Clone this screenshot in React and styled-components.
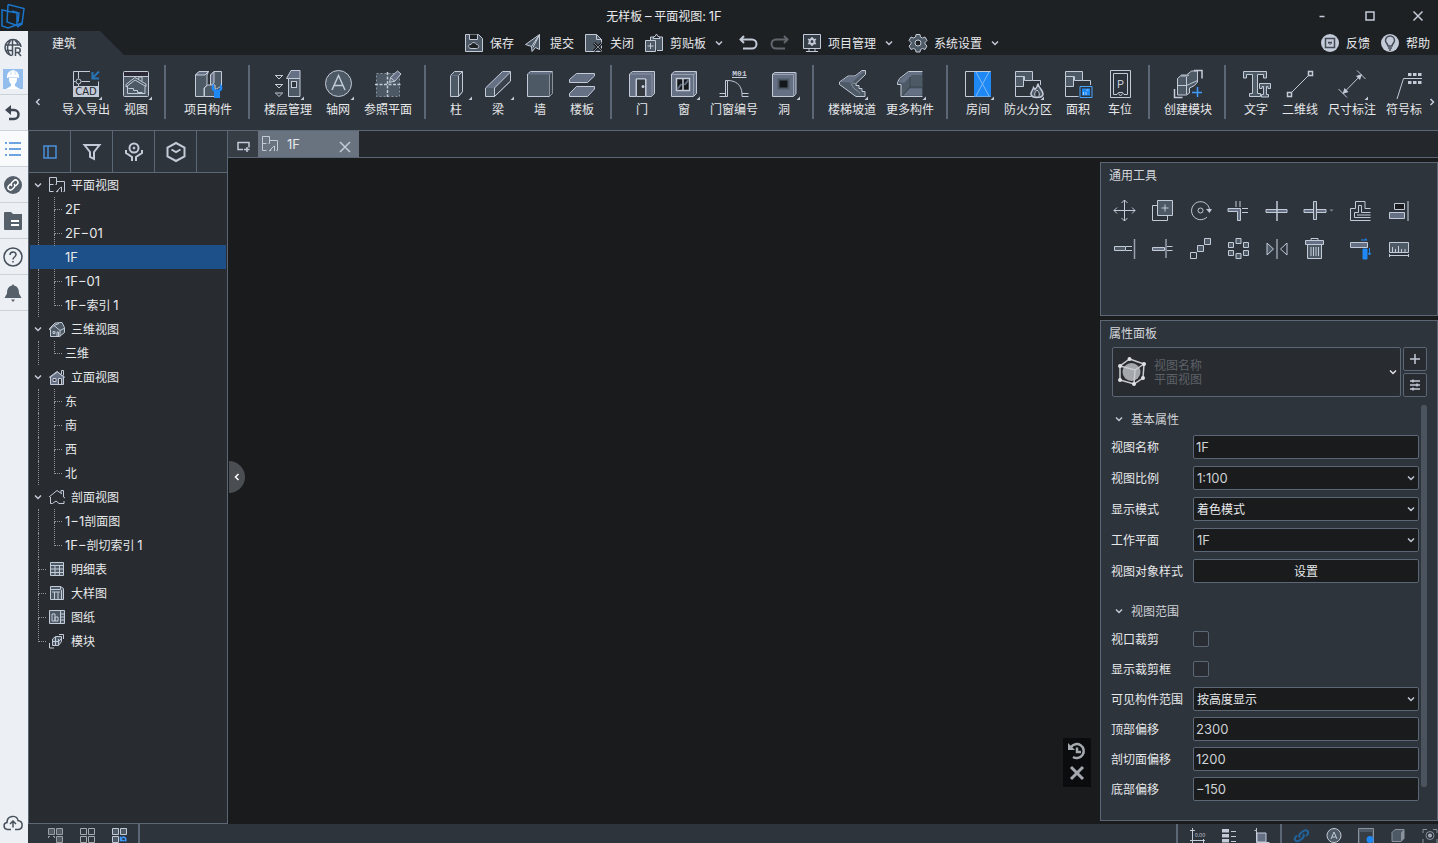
import styled, { createGlobalStyle } from "styled-components";

const colors = {
  title: "#1e2124",
  bar: "#2e343c",
  panel: "#282b2f",
  canvas: "#191b1c",
  line: "#5b6774",
  text: "#e6e8ea",
  icon: "#c3cad8",
  fill: "#4d5a66",
  mid: "#667085",
  blue: "#1e88f5",
  select: "#1d4f88",
};

const GlobalStyle = createGlobalStyle`
  * {
    box-sizing: border-box;
  }
  html, body, #root {
    height: 100%;
  }
  body {
    margin: 0;
    overflow: hidden;
    background: ${colors.canvas};
    color: ${colors.text};
    font: 12px/20px "Noto Sans CJK SC", sans-serif;
  }
  button, input, select {
    margin: 0;
    padding: 0;
    border: 0;
    background: none;
    color: inherit;
    font: inherit;
  }
  ul {
    margin: 0;
    padding: 0;
    list-style: none;
  }
  svg {
    display: block;
    flex: none;
    overflow: visible;
  }
`;

const Page = styled.div`
  display: flex;
  flex-direction: column;
  height: 100vh;
  overflow: hidden;
`;

/* ---------- title bar ---------- */

const TitleBar = styled.header`
  display: flex;
  flex: 0 0 31px;
  align-items: center;
  background: ${colors.title};
`;

const Title = styled.h1`
  flex: 1;
  margin: 0;
  font-size: 12px;
  font-weight: 400;
  line-height: 20px;
  text-align: center;
`;

const WindowButtons = styled.div`
  display: flex;
  gap: 8px;
`;

const WindowButton = styled.button`
  display: flex;
  align-items: center;
  justify-content: center;
  width: 40px;
  height: 30px;
`;

const Latin = styled.span`
  font-family: Inter, sans-serif;
  font-size: 13px;
`;

/* ---------- left rail ---------- */

const Body = styled.div`
  display: flex;
  flex: 1;
  min-height: 0;
`;

const Rail = styled.nav`
  display: flex;
  flex: 0 0 28px;
  flex-direction: column;
  background: #eceff3;
`;

const RailButton = styled.button`
  display: flex;
  flex: 0 0 ${(p) => p.$height || 36}px;
  align-items: center;
  justify-content: center;
  width: 100%;
  padding-right: 3px;
  background: ${(p) => (p.$active ? "#f9fafb" : "transparent")};
  border-bottom: ${(p) => (p.$divided ? "1px solid #cdd2d8" : "0")};
`;

const RailSpace = styled.div`
  flex: 1;
`;

const Main = styled.div`
  display: flex;
  flex: 1;
  flex-direction: column;
  min-width: 0;
`;

/* ---------- quick bar ---------- */

const QuickBar = styled.div`
  display: grid;
  flex: 0 0 24px;
  grid-template-columns: 1fr auto 1fr;
  align-items: center;
  background: ${colors.title};
`;

const MenuTab = styled.button`
  width: 96px;
  height: 24px;
  padding-right: 24px;
  background: ${colors.bar};
  clip-path: polygon(0 0, 72px 0, 96px 24px, 0 24px);
`;

const QuickGroup = styled.div`
  display: flex;
  gap: ${(p) => p.$gap || 11}px;
  align-items: center;
  justify-content: ${(p) => (p.$end ? "flex-end" : "flex-start")};
  padding-right: ${(p) => (p.$end ? 8 : 0)}px;
`;

const QuickButton = styled.button`
  display: flex;
  gap: 7px;
  align-items: center;
  white-space: nowrap;
`;

/* ---------- ribbon ---------- */

const RibbonBar = styled.div`
  display: flex;
  flex: 0 0 76px;
  background: ${colors.bar};
  border-bottom: 1px solid ${colors.line};
`;

const RibbonScroll = styled.button`
  display: flex;
  flex: 0 0 ${(p) => p.$width}px;
  align-items: center;
  justify-content: center;
  padding-top: 18px;
`;

const RibbonGroups = styled.div`
  display: flex;
  flex: 1;
  min-width: 0;
  padding-top: 10px;
  overflow: hidden;
`;

const RibbonGroup = styled.div`
  display: flex;
  flex: none;
  gap: 8px;
  height: 54px;
  padding: 4px 11px 0 13px;
  border-right: 2px solid ${colors.line};

  &:last-child {
    border-right: 0;
  }
`;

const RibbonButton = styled.button`
  display: flex;
  flex: none;
  flex-direction: column;
  align-items: center;
  width: ${(p) => p.$width}px;
  height: 50px;
  white-space: nowrap;
`;

const ClippedLabel = styled.span`
  align-self: flex-start;
  padding-left: 1px;
`;

/* ---------- project tree ---------- */

const Workspace = styled.div`
  display: flex;
  flex: 1;
  min-height: 0;
`;

const Side = styled.aside`
  display: flex;
  flex: 0 0 200px;
  flex-direction: column;
  background: ${colors.panel};
  border: 1px solid ${colors.line};
  border-top: 0;
`;

const SideTabs = styled.div`
  display: flex;
  flex: 0 0 42px;
  background: ${colors.bar};
  border-bottom: 1px solid ${colors.line};
`;

const SideTab = styled.button`
  display: flex;
  flex: 0 0 42px;
  align-items: center;
  justify-content: center;
  border-right: 1px solid ${colors.line};
`;

const TreeRow = styled.button`
  display: flex;
  align-items: center;
  width: calc(100% - 2px);
  height: 24px;
  margin-left: 1px;
  padding-left: ${(p) => (p.$selected ? 35 : p.$group ? 2 : 8)}px;
  background: ${(p) => (p.$selected ? colors.select : "transparent")};
  text-align: left;
  white-space: nowrap;
`;

const TreeIcon = styled.span`
  display: flex;
  padding: 0 6px 0 5px;
`;

const Guide = styled.span`
  width: 16px;
  height: 24px;
  border-left: 1px dotted #90949a;
`;

const Elbow = styled.span`
  width: 8px;
  height: 24px;
  margin-right: ${(p) => (p.$leaf ? -2 : 3)}px;

  &::before,
  &::after {
    display: block;
    height: 12px;
    border-left: 1px dotted #90949a;
    content: "";
  }
  &::before {
    border-bottom: 1px dotted #90949a;
  }
  &::after {
    border-left-color: ${(p) => (p.$last ? "transparent" : "#90949a")};
  }
`;

/* ---------- drawing area ---------- */

const View = styled.main`
  display: flex;
  flex: 1;
  flex-direction: column;
  min-width: 0;
`;

const ViewTabs = styled.div`
  display: flex;
  flex: 0 0 27px;
  background: #24282c;
  border-bottom: 1px solid ${colors.line};
`;

const NewViewButton = styled.button`
  display: flex;
  flex: 0 0 30px;
  align-items: center;
  justify-content: center;
  padding-top: 4px;
  background: #373d44;
`;

const ViewTab = styled.div`
  display: flex;
  flex: 0 0 101px;
  align-items: center;
  height: 26px;
  padding: 0 8px 0 4px;
  background: #69737f;
`;

const ViewName = styled.button`
  display: flex;
  flex: 1;
  gap: 9px;
  align-items: center;
`;

const CloseTab = styled.button`
  padding-top: 5px;
`;

const Canvas = styled.div`
  position: relative;
  display: flex;
  flex: 1;
  justify-content: flex-end;
  min-height: 0;
  background: ${colors.canvas};
`;

const Collapse = styled.button`
  position: absolute;
  top: calc(50% - 30px);
  left: 1px;
  display: flex;
  align-items: center;
  justify-content: center;
  width: 16px;
  height: 32px;
  background: #4a4e52;
  border-radius: 0 16px 16px 0;
`;

const FloatTools = styled.div`
  display: flex;
  flex-direction: column;
  gap: 4px;
  align-items: center;
  align-self: flex-end;
  width: 28px;
  margin: 0 9px 37px 0;
  padding: 4px 0 5px;
  background: #0b0c0d;
`;

const Dock = styled.div`
  display: flex;
  flex: 0 0 338px;
  flex-direction: column;
  gap: 4px;
  padding: 4px 0 3px;
`;

const Panel = styled.section`
  flex: ${(p) => (p.$grow ? "1" : "0 0 154px")};
  min-height: 0;
  padding-left: 8px;
  background: ${colors.bar};
  border: 1px solid ${colors.line};
  overflow: hidden;
`;

const PanelTitle = styled.h2`
  margin: 0;
  padding: 2px 0;
  color: #d3d6da;
  font-size: 12px;
  font-weight: 400;
`;

const ToolGrid = styled.div`
  display: grid;
  grid-template-columns: repeat(5, 38px) 46px 38px 38px;
  grid-auto-rows: 38px;
  padding: 5px 0 0 5px;
`;

const Tool = styled.button`
  display: flex;
  align-items: center;
`;

/* ---------- properties ---------- */

const TypePicker = styled.div`
  display: flex;
  gap: 2px;
  height: 50px;
  margin: 2px 10px 8px 3px;
`;

const TypeButton = styled.button`
  display: flex;
  flex: 1;
  gap: 7px;
  align-items: center;
  padding: 0 1px 0 4px;
  background: ${colors.panel};
  border: 1px solid ${colors.line};
  border-radius: 2px;
  color: #5c6168;
  line-height: 14px;
  text-align: left;
`;

const TypeText = styled.span`
  flex: 1;
`;

const TypeActions = styled.div`
  display: grid;
  gap: 2px;
  width: 24px;
`;

const TypeAction = styled.button`
  display: flex;
  align-items: center;
  justify-content: center;
  background: ${colors.panel};
  border: 1px solid ${colors.line};
  border-radius: 2px;
`;

const Properties = styled.div`
  display: flex;
  justify-content: space-between;
  padding-right: 10px;
`;

const Fields = styled.div`
  flex: 1;
  padding: 2px 2px 0 2px;
`;

const Scrollbar = styled.div`
  width: 6px;
  height: 382px;
  background: #4a535e;
  border-radius: 2px;
`;

const Section = styled.fieldset`
  display: grid;
  gap: ${(p) => p.$gap}px;
  min-width: 0;
  margin: 0 0 16px;
  padding: 0;
  border: 0;
`;

const SectionHead = styled.button`
  display: flex;
  gap: 6px;
  align-items: center;
  height: 24px;
  margin-bottom: ${(p) => p.$pull}px;
  padding-left: 2px;
  color: #cfd2d6;
`;

const Field = styled.div`
  display: grid;
  grid-template-columns: 82px 1fr;
  align-items: center;
  height: 24px;
`;

const control = `
  width: 100%;
  height: 24px;
  padding: 0 3px;
  background: #191b1c;
  border: 1px solid #5b6774;
  border-radius: 2px;
`;

const TextBox = styled.input`
  ${control}
  padding: 0 2px;
  color: #cfd2d6;
  font-family: Inter, "Noto Sans CJK SC", sans-serif;
  font-size: 13px;
`;

const SelectWrap = styled.div`
  position: relative;

  svg {
    position: absolute;
    top: 6px;
    right: 2px;
    pointer-events: none;
  }
`;

const Select = styled.select`
  ${control}
  appearance: none;
  color: ${(p) => (p.$latin ? "#cfd2d6" : colors.text)};
  font-family: ${(p) => (p.$latin ? "Inter, sans-serif" : "inherit")};
  font-size: ${(p) => (p.$latin ? 13 : 12)}px;
`;

const SetButton = styled.button`
  ${control}
`;

const CheckBox = styled.input`
  width: 16px;
  height: 16px;
  appearance: none;
  background: #2a2c33;
  border: 1px solid ${colors.line};
  border-radius: 2px;
`;

/* ---------- status bar ---------- */

const StatusBar = styled.footer`
  display: flex;
  flex: 0 0 19px;
  align-items: flex-start;
  justify-content: space-between;
  background: ${colors.bar};
  overflow: hidden;
`;

const StatusGroup = styled.div`
  display: flex;
  gap: 16px;
  height: 19px;
  padding: 4px 10px 0 ${(p) => p.$left || 12}px;
  border-right: ${(p) => (p.$end ? "2px solid #5b6774" : "0")};
  border-left: ${(p) => (p.$start ? "2px solid #5b6774" : "0")};
`;

const StatusRight = styled.div`
  display: flex;
  margin-right: -10px;
`;

/* ---------- icons ---------- */

const I = colors.icon;
const F = colors.fill;
const M = colors.mid;
const B = colors.blue;

function Svg({ size = 30, box = size, width = 1, children }) {
  return (
    <svg
      width={size}
      height={size}
      viewBox={`0 0 ${box} ${box}`}
      fill="none"
      stroke={I}
      strokeWidth={width}
      aria-hidden="true"
    >
      {children}
    </svg>
  );
}

function Chevron({ dir = "down", color = I, size = 12 }) {
  const paths = {
    down: "M3 4.5l3 3 3-3",
    left: "M7.5 3l-3 3 3 3",
    right: "M4.5 3l3 3-3 3",
  };
  return (
    <Svg size={size} box={12} width={1.5}>
      <path d={paths[dir]} stroke={color} />
    </Svg>
  );
}

const floorPlan = (
  <path d="M7.500 5V.5h-7v14h4M.5 7.500h4M6.500 7.500h1V4.500h8v10h-1M7 15c1-.5 1.500-1 2-2M8.500 15c0-2 2-4 4-5v5" />
);

const ribbonIcons = {
  cad: (
    <>
      <path d="M2.500 17V2.500H19M7.500 2.500v7M7.500 15v2M10.500 12.500H19M2.500 12.500h2M27.500 12.500V17" />
      <circle cx="7.500" cy="12.500" r="2.500" />
      <path d="M2 17h26v11H2z" fill={I} stroke="none" />
      <text x="15" y="26" fill="#23282e" stroke="none" fontSize="10" fontFamily="DejaVu Sans" textAnchor="middle">CAD</text>
      <path d="M28 2.500l-6.500 6.500M21.500 3v6.500H28" stroke="#2775b5" strokeWidth="2" />
    </>
  ),
  view: (
    <>
      <rect x="2.500" y="2.500" width="25" height="25" rx="1" fill={F} />
      <path d="M3 3h24v4H3z" fill="#2d2b38" stroke="none" />
      <path d="M3 7.500h24M5 15.500l9-7 11 6.500v2.500L14 11l-9 7zM17.500 10l.5-2h3v4M6.500 17v7.500h17.500v-7M7.500 19.500h5v2h4v2h5" />
    </>
  ),
  project: (
    <>
      <path d="M2.500 6L6 2.500h9.500L14 6v10l-3 3v8.500H2.500z" fill={F} />
      <path d="M2.500 6L6 2.500h9.500L12 6z" fill={M} />
      <path d="M17.500 6L21 2.500h7.500V17l-5 3h-6z" fill={F} />
      <path d="M17.500 6L21 2.500V14l-3.500 3z" fill={M} />
      <path d="M11.500 19l3-3H22v11.500H11.500z" fill={F} />
      <path d="M21 14.500c-3 2-3.500 6.500 0 8V29h6v-6.500c3.500-1.500 3-6 0-8V19l-1.500 1.500h-3L21 19z" fill={B} stroke="none" />
    </>
  ),
  levels: (
    <>
      <path d="M2 6.500h8M3 7l3 3 3-3M2 15.500h8M3 16l3 3 3-3M2 24h8M3 24.500l3 3 3-3" />
      <path d="M13.500 9.500L18 1.500h9v8z" fill={M} />
      <path d="M15.500 9.500H27v18H15.500z" fill={F} />
      <rect x="18.500" y="12.500" width="5" height="6" fill={colors.bar} />
    </>
  ),
  grid: (
    <>
      <circle cx="15.500" cy="14.500" r="13" fill={F} />
      <path d="M9 21l6.500-14.500L22 21M11 16.500h9" strokeWidth="1.500" />
    </>
  ),
  refPlane: (
    <>
      <path d="M3.500 4.500h23v23h-23z" fill={F} stroke="#8a929e" strokeDasharray="2 2" />
      <path d="M2 15.500h26M14.500 3v25" strokeDasharray="3 1.500" strokeWidth="1.500" />
      <path d="M16.500 13.500l1-5 7-6.500 3.500 3-6 7z" fill={M} />
      <path d="M18 9l3.500 3" />
    </>
  ),
  column: (
    <>
      <path d="M9.500 6.500l4-4h8v20l-4 5h-8z" fill={F} />
      <path d="M17.500 27.500v-21l4-4v20z" fill="#39424b" />
      <path d="M9.500 6.500h8" stroke={M} />
    </>
  ),
  beam: (
    <>
      <path d="M2.500 19l17-16.500h8v9.500l-16 15.500h-9z" fill={M} />
      <path d="M11.500 19L27.500 3v9l-16 15.500z" fill="#39424b" />
      <path d="M3 19h8v8H3z" fill={F} stroke="none" />
    </>
  ),
  wall: (
    <>
      <path d="M2.500 5l3-2.500h22v22l-3 3h-22z" fill={F} />
      <path d="M24.500 5.500l3-3v22l-3 3z" fill="#39424b" stroke="#8a929e" />
      <path d="M3 5l3-2h21l-3 2.500H3z" fill={M} stroke="none" />
    </>
  ),
  slab: (
    <>
      <path d="M2.500 10.500l7-6h18V7l-7 6.500h-18z" fill={M} />
      <path d="M2.500 24.500l7-7h18V20l-7 7.500h-18z" fill={M} />
    </>
  ),
  door: (
    <>
      <path d="M2.500 5l3-2.500h22v22l-3 3H19V10H9v17.500H2.500z" fill={M} />
      <path d="M9.500 10h9v17.500h-9z" fill="#33393f" />
      <path d="M25 5v22M3 5h22" stroke="#8c95a5" />
      <circle cx="16" cy="17.500" r="1.500" fill={I} stroke="none" />
    </>
  ),
  window: (
    <>
      <path d="M2.500 5l3-2.500h22v22l-3 3h-22z" fill={M} />
      <path d="M24.500 5.500v22M3 5.500h22l2.500-3" stroke="#98a1b0" />
      <path d="M7.500 9.500h13v12h-13z" fill="#15181b" strokeWidth="1.500" />
      <path d="M8.500 20l4-5M15.500 16l4-5" stroke={M} strokeWidth="2" />
      <path d="M14 9.500v12" strokeWidth="1.500" />
    </>
  ),
  tag: (
    <>
      <text x="20.500" y="7" fill={I} stroke="none" fontSize="8" fontWeight="700" fontFamily="Liberation Mono" textAnchor="middle">M01</text>
      <path d="M13 8.500h14.500M6.500 11.500h2v16h-2zM8.500 11.500c8 0 14 4 14.500 13M.5 24.500h6v3h-6M29.500 24.500H23v3h6.500" />
    </>
  ),
  opening: (
    <>
      <path d="M3.500 5L6 3.500h21v21l-2.500 3h-21z" fill={M} />
      <path d="M24.500 5.500v22M3.500 5.500h21l2.500-2" stroke="#98a1b0" />
      <path d="M9.500 10.500h10v9h-10z" fill="#15181b" stroke={F} strokeWidth="2" />
    </>
  ),
  stairs: (
    <>
      <path d="M2.500 13L11 7h7l7-5.500h3.500v4L19 14.500v2h3v3h3v3h3v5h-9L2.500 15.500z" fill={F} />
      <path d="M3 13l8.500-5.500H18L25.500 2H28L15 13.500z" fill={M} stroke="none" />
      <path d="M15 14l4 .5M14 14.500l3 5 3 2 3 3" stroke="#8a929e" />
    </>
  ),
  more: (
    <>
      <path d="M27.500 2.500h-14l-9 7-2 4v2H6v12h21.500" fill={F} />
      <path d="M3 13l11-10h13v3H17l-8 8z" fill={M} stroke="none" />
      <path d="M15 8v10h12M15 18l-8 9" stroke="#39424b" />
      <path d="M8 26.500l7-7h12v7z" fill={M} stroke="none" />
    </>
  ),
  room: (
    <>
      <path d="M2.500 2.500h25v25h-25z" />
      <path d="M11 3h17v24.500H11z" fill={B} stroke="none" />
      <path d="M13 3l13 24M26 3L13 27" stroke="#7eb9f5" />
    </>
  ),
  fireZone: (
    <>
      <path d="M2.500 2.500h17v9h-8v-4h-9z" fill={F} />
      <path d="M2.500 7.500h8v10h-8z" fill={F} />
      <path d="M2.500 17.500v10h16M19.500 11.500h8V16" />
      <path d="M25 14.500c0 4 5.500 7 5 11-1 4-11 4-12 0-.5-3 2-4 2.500-7l1.500 2c2-2 2.500-3 3-6z" fill={F} strokeWidth="1.500" />
      <path d="M24 21c-4 4-2 7 0 7s4-3 0-7z" fill={colors.bar} />
    </>
  ),
  area: (
    <>
      <path d="M2.500 2.500h17v9h-8v-4h-9z" fill={F} />
      <path d="M2.500 7.500h8v10h-8z" fill={F} />
      <path d="M2.500 17.500v10h13M19.500 11.500h8V16" />
      <path d="M17 17.500h12v11H17z" stroke="#4aa3ff" />
      <path d="M19 19.500h8v7h-8z" fill={B} stroke="none" />
      <path d="M20.500 26v-3M23 26v-3M25.500 21h-2" stroke="#9fceff" />
    </>
  ),
  parking: (
    <>
      <path d="M5.500 1.500h20v27h-20z" />
      <path d="M8.500 25.500v-21h14v21" />
      <text x="15.500" y="19" fill={I} stroke="none" fontSize="11" fontFamily="Inter" textAnchor="middle">P</text>
      <path d="M8.500 25.500H12l1.500-2h4l1.500 2h3.500M13.500 24.500l2 2.500 2-2.500" />
    </>
  ),
  module: (
    <>
      <path d="M4.500 9.500l4-3.500h5l5-4h6v11l-3 3.500-5 2.500v5l-3 2h-9z" fill={F} />
      <path d="M4.500 16.500h9l11-5M13.500 8v17.500M8 7h6l2-1" />
      <path d="M21 1.500h8v8M1.500 20v8.500h8" strokeWidth="1.500" />
      <path d="M24.500 18v10M19 23.500h10" stroke="#3f9bff" strokeWidth="1.500" />
    </>
  ),
  text: (
    <>
      <path d="M2.500 2.500h23V9h-3V5.500h-6v19h3v3h-11v-3h3v-19h-6V9h-3z" fill={F} />
      <path d="M18.500 14.500h11v5H27v-2h-1.500v8h2v2.500h-7v-2.500h2v-8H21v2h-2.500z" fill={F} />
    </>
  ),
  line: (
    <>
      <path d="M6 24L24 6" />
      <path d="M2.500 23.500h4v4h-4zM23.500 2.500h4v4h-4z" strokeWidth="1.500" />
    </>
  ),
  dimension: (
    <>
      <path d="M7 23.500L23.500 6.500M20 1.500l8.500 8.500M1.500 20l8.500 8.500" />
      <path d="M25 5l-2 6-4-4zM5.500 25l2-6 4 4z" fill={I} stroke="none" />
    </>
  ),
  symbol: (
    <>
      <path d="M2 30L8.500 9.500H27" />
      <path d="M13 5.500h14M13 13.500h14" strokeWidth="3" strokeDasharray="3.500 1.500" />
    </>
  ),
};

const ribbon = [
  [["导入导出", "cad", true], ["视图", "view", true]],
  [["项目构件", "project", false, 58]],
  [["楼层管理", "levels", true], ["轴网", "grid", true], ["参照平面", "refPlane"]],
  [["柱", "column", true], ["梁", "beam", true], ["墙", "wall"], ["楼板", "slab"]],
  [["门", "door"], ["窗", "window", true], ["门窗编号", "tag"], ["洞", "opening", true]],
  [["楼梯坡道", "stairs", true], ["更多构件", "more", true]],
  [["房间", "room", true], ["防火分区", "fireZone", true], ["面积", "area"], ["车位", "parking"]],
  [["创建模块", "module"]],
  [["文字", "text"], ["二维线", "line"], ["尺寸标注", "dimension", true], ["符号标", "symbol", false, 50, true]],
];

const widthFor = { 1: 34, 2: 34, 3: 38, 4: 50 };

const quickIcons = {
  save: (
    <>
      <path d="M.5.500h13l4 4v13H.5z" fill={F} />
      <path d="M4.500.500v5h8v-5M6 14.500c-4-1-3-4 0-4 1-3 5-2 5.500 0 3 0 3 4 0 4z" fill={colors.title} />
    </>
  ),
  submit: (
    <>
      <path d="M.5 10.500L14.500.500v15l-4-2-3.500 4-.5-5z" fill={F} />
      <path d="M6.500 12.500l8-12L8 13.500" />
    </>
  ),
  closeFile: (
    <>
      <path d="M.5.500h11l5 5v12H.5z" fill={F} />
      <path d="M11.500.500v5h5" />
      <path d="M9 9l8 8M17 9l-8 8" stroke="#1b1d20" strokeWidth="3" />
      <path d="M9 9l8 8M17 9l-8 8" stroke="#858a92" />
    </>
  ),
  clipboard: (
    <>
      <path d="M5.500 6V3h12v13.500H12" fill={F} />
      <path d="M8 4.500h7l-1-2h-1L11.500 0 10 2.500H9z" fill={colors.title} />
      <path d="M.5 6.500h10v11H.5z" fill={F} />
      <path d="M5.500 9v6M2.500 12h6" />
    </>
  ),
  undo: <path d="M5 2L1.500 5.500 5 9M1.500 5.500H13a4 4 0 0 1 0 9H4" strokeWidth="2" />,
  redo: <path d="M13 2l3.500 3.500L13 9M16.500 5.500H5a4 4 0 0 0 0 9h9" stroke="#62666c" strokeWidth="2" />,
  manage: (
    <>
      <path d="M.5.500h17v14H.5z" fill="#353d46" />
      <path d="M3 17.500h12M6 15v2M12 15v2" />
      <circle cx="9" cy="7.500" r="2.500" strokeWidth="2" />
      <path d="M9 3v2M9 10v2M5 5l1.500 1M13 5l-1.500 1M5 10l1.500-1M13 10l-1.500-1" strokeWidth="1.500" />
    </>
  ),
  gear: (
    <>
      <path d="M7 .5h4l.5 2.500 2 1 2.500-1 2 3.500-2 2v1.500l2 2-2 3.500-2.500-1-2 1-.5 2.500H7l-.5-2.500-2-1-2.500 1L0 12l2-2V8.500l-2-2L2 3l2.500 1 2-1z" fill={F} />
      <circle cx="9" cy="9" r="3" fill={colors.title} />
    </>
  ),
  feedback: (
    <>
      <circle cx="9" cy="9" r="9" fill={I} stroke="none" />
      <path d="M4.500 4.500h9v9h-9zM7 8.500h4" stroke="#454c56" strokeWidth="1.500" />
      <path d="M7.500 9l1.500 1.500L10.500 9" stroke="#454c56" />
    </>
  ),
  help: (
    <>
      <circle cx="9" cy="9" r="9" fill={I} stroke="none" />
      <path d="M7 12c0-2-2.500-3-2.500-5.500a4.500 4.500 0 0 1 9 0C13.500 9 11 10 11 12zM7 14h4M8 16h2" stroke="#454c56" strokeWidth="1.500" />
    </>
  ),
};

const toolIcons = [
  ["移动", <path d="M10.500 0v21M0 10.500h21M7.500 3l3-3 3 3M7.500 18l3 3 3-3M3 7.500l-3 3 3 3M18 7.500l3 3-3 3" />],
  ["复制", (
    <>
      <path d="M5 5.500H.5v15h15V16" />
      <path d="M5.500.500h15v15h-15z" fill={F} />
      <path d="M13 4.500v7M9.500 8h7" />
    </>
  )],
  ["旋转", (
    <>
      <path d="M17 17a9 9 0 1 1 2.500-7.500" />
      <circle cx="10.500" cy="10.500" r="2.500" />
      <path d="M16 9h6l-2.500 4z" fill={I} stroke="none" />
    </>
  )],
  ["修剪", (
    <>
      <path d="M0 8.500h12.500v12h-3v-9H0z" fill={M} />
      <path d="M8 1v6M12 1v6M14 8.500h6M14 12.500h6" />
    </>
  )],
  ["打断", (
    <>
      <path d="M0 9.500h21v3H0z" fill={M} />
      <path d="M11 1v20" strokeWidth="1.500" />
    </>
  )],
  ["拆分", (
    <>
      <path d="M0 9.500h22v3H0z" fill={M} />
      <path d="M9.500 1.500h3v18h-3z" fill={F} />
      <path d="M25.500 9.500h4l-2 2z" fill="#858d99" stroke="none" />
    </>
  )],
  ["偏移", <path d="M20.500 8.500H15v-7H5.500v7H.5v12h20M20.500 12.500h-9v-7h-3v7H4.500v5h16M20.500 15H7" />],
  ["对齐", (
    <>
      <path d="M6.500 3.500h10v6h-10z" fill="#191b1c" />
      <path d="M1.500 12.500h15v6h-15z" fill={M} />
      <path d="M20 1v20" stroke="#98a1ae" strokeWidth="1.500" />
    </>
  )],
  ["延伸", (
    <>
      <path d="M.5 8.500h11v4H.5z" fill={F} />
      <path d="M12 8.500h6M12 12.500h6" />
      <path d="M20.500 1v20" stroke="#98a1ae" strokeWidth="1.500" />
    </>
  )],
  ["断开", (
    <>
      <path d="M.5 9.500h12v3H.5z" fill={M} />
      <path d="M15 8.500h5.500M15 12.500h5.500" />
      <path d="M14 1v19" stroke="#98a1ae" strokeWidth="1.500" />
    </>
  )],
  ["线性阵列", (
    <>
      <path d="M.5 14.500h6v6h-6z" />
      <path d="M7.500 7.500h6v6h-6zM14.500.500h6v6h-6z" fill={F} />
    </>
  )],
  ["环形阵列", (
    <path
      d="M8 .5h5v5H8zM8 15.500h5v5H8zM.5 4.500h5v5h-5zM15.500 4.500h5v5h-5zM.5 12.500h5v5h-5zM15.500 12.500h5v5h-5z"
      fill={F}
    />
  )],
  ["镜像", (
    <>
      <path d="M1 5l6.500 6L1 17z" fill={F} />
      <path d="M21 5l-6.500 6 6.500 6z" />
      <path d="M11 1v20" strokeWidth="1.500" stroke="#98a1ae" />
    </>
  )],
  ["删除", (
    <>
      <path d="M3.500 6.500h14v14h-14z" fill={F} />
      <path d="M1.500 2.500h18v4h-18z" fill={M} />
      <path d="M7 2V.5h7V2M7 9v9M9.500 9v9M12 9v9M14.500 9v9" />
    </>
  )],
  ["连接", (
    <>
      <path d="M.5 4.500h17v5H.5z" fill={M} />
      <path d="M13 11h4v10h-4z" fill={B} stroke={B} />
      <path d="M11 2h6M15 .5l2 1.500M19.500 10v7M18 15l1.500 2 1.500-2" stroke={B} />
    </>
  )],
  ["测量", (
    <>
      <path d="M1.500 4.500h19v10h-19z" fill={F} />
      <path d="M4.500 14V9M7.500 14v-3M10.500 14V8M13.500 14v-3M17 14v-3M1 17.500h20M1.500 16v3M20.500 16v3" />
    </>
  )],
];

const treeIcons = {
  plan: floorPlan,
  three: (
    <>
      <path d="M.5 7.500L6 2l7-.500 2.500 5v5l-5 4h-9V9z" fill={F} />
      <path d="M0 9l5-4.500 6 5 5-2.500M5 4.500l5-2M11 9.500v6M4 10.500h2v2H4zM8 15v-4h1.500v4" />
    </>
  ),
  elevation: (
    <>
      <path d="M1.500 8v7.500h13V8l-6-5z" fill={M} />
      <path d="M0 8.500l8-6 8 6M12.500 5V1.500h2v5" />
      <path d="M4 9.500h3v3H4zM9.500 15v-5.500h3V15" fill={colors.panel} />
    </>
  ),
  section: <path d="M1.500 8v6.500h2L7 12l3 2.500h5V12M0 8l8-6.500L13 5M12 4V1.500h2.500V8L16 9" />,
  table: (
    <>
      <path d="M1.500 1.500h13v13h-13z" fill={F} />
      <path d="M1.500 4.500h13M1.500 8h13M1.500 11.500h13M6 4.500v10M10.500 4.500v10" />
    </>
  ),
  detail: (
    <>
      <path d="M1.500 1.500h10l3 2v11h-13z" fill={F} />
      <path d="M1.500 4.500h10v-3M5.500 7v7M9 7v7M12.500 5v9M3 7h8" />
    </>
  ),
  sheet: (
    <>
      <path d="M.5 1.500h15v13H.5z" fill={F} />
      <path d="M11.500 2v12M11.500 5h4M11.500 8h4M11.500 11h4M3 5h3v7H3zM6 8h3v4H6z" />
    </>
  ),
  module: (
    <>
      <path d="M3.500 6l3-2.500h6v5l-3 4h-6z" fill={F} />
      <path d="M3.500 8.500h6l3-3M6.500 4v8.500M10 1.500h4.500V6M.5 10v5H5M9.500 6v6" />
    </>
  ),
};

const tree = [
  ["平面视图", "plan", ["2F", "2F−01", "1F", "1F−01", "1F−索引 1"]],
  ["三维视图", "three", ["三维"]],
  ["立面视图", "elevation", ["东", "南", "西", "北"]],
  ["剖面视图", "section", ["1−1剖面图", "1F−剖切索引 1"]],
  ["明细表", "table"],
  ["大样图", "detail"],
  ["图纸", "sheet"],
  ["模块", "module"],
];

const statusIcons = {
  tilesA: <path d="M.5.500h6v6h-6zM8.500.500h6v6h-6zM8.500 8.500h6v6h-6zM.5 10v-1.500H2M5 8.500h1.500V10" stroke="#9aa0a8" fill="#555a60" />,
  tilesB: <path d="M.5.500h6v6h-6zM8.500.500h6v6h-6zM.5 8.500h6v6h-6zM8.500 8.500h6v6h-6z" stroke="#a4aab2" fill="#33383e" />,
  tilesC: (
    <>
      <path d="M.5.500h6v6h-6zM8.500.500h6v6h-6zM.5 8.500h6v6h-6z" fill={F} />
      <path d="M8.500 8.500v4h4M9 12c1-5 6-3 4.500 1.500" stroke="#3f9bff" strokeWidth="1.500" />
    </>
  ),
  axis: (
    <>
      <path d="M2.500 0v15M0 2.500h5M0 12.500h15M13.500 11v4" />
      <text x="10" y="9" fill={I} stroke="none" fontSize="5" fontFamily="Inter" textAnchor="middle">0.00</text>
    </>
  ),
  list: (
    <>
      <path d="M0 1h7v3.500H0zM0 6h7v3.500H0zM0 11h7v3.500H0z" fill={I} stroke="none" />
      <path d="M9 3.500h5M9 8.500h5M9 13.500h5" />
    </>
  ),
  crop: (
    <>
      <path d="M3 5h9v9H3z" fill={M} />
      <path d="M.5 2.500h2v12h13M2.500 2.500V0" />
    </>
  ),
  link: (
    <path
      d="M6 9.500c-2-2 0-4 2-5.500s4-2.500 5.500-1 .5 3.500-1.500 5M9 6c2 2 0 4-2 5.500S3 14 1.500 12.500 1 9 3 7.500"
      stroke="#22659c"
      strokeWidth="2"
    />
  ),
  auto: (
    <>
      <circle cx="8" cy="7.500" r="7" fill={F} />
      <path d="M5 11l3-7 3 7M6 9h4" />
    </>
  ),
  pane: (
    <>
      <path d="M.5.500h15v16H.5z" fill={F} stroke="#8a929e" />
      <path d="M2 4h12v12H2z" fill="#363d45" stroke="none" />
      <circle cx="12" cy="11.500" r="3.500" fill={B} stroke="none" />
    </>
  ),
  cube: (
    <>
      <path d="M2 4.500l3-3h9v9l-3 3H2z" fill={F} stroke="#8a929e" />
      <path d="M11 4.500l3-3v9l-3 3z" fill="#8a929e" stroke="none" />
    </>
  ),
  focus: (
    <>
      <path d="M1 5V1.500h4M11 1.500h4V5M1 11v4M15 11v4" stroke="#8a929e" />
      <circle cx="8" cy="7.500" r="4" stroke="#8a929e" />
      <circle cx="8" cy="7.500" r="1.500" fill="#8a929e" />
    </>
  ),
};

// Latin runs are set in Inter, one size up from the Chinese text.
function MixedText({ children }) {
  return (
    <span>
      {children.split(/([A-Za-z0-9–−:]+)/).map((part, i) =>
        i % 2 ? <Latin key={i}>{part}</Latin> : part
      )}
    </span>
  );
}

function RibbonItem({ item: [label, icon, menu, width, clipped] }) {
  return (
    <RibbonButton type="button" $width={width || widthFor[label.length]}>
      <Svg>
        {ribbonIcons[icon]}
        {menu && <path d="M31 27.500v3.500h-3.500z" fill={I} stroke="none" />}
      </Svg>
      {clipped ? <ClippedLabel>{label}</ClippedLabel> : label}
    </RibbonButton>
  );
}

function QuickItem({ icon, label, menu }) {
  return (
    <QuickButton type="button" aria-label={label || icon}>
      <Svg size={18}>{quickIcons[icon]}</Svg>
      {label}
      {menu && <Chevron />}
    </QuickButton>
  );
}

function LeftRail() {
  return (
    <Rail>
      <RailButton type="button" aria-label="网络" $height={33}>
        <Svg size={18}>
          <g stroke="#46505c" strokeWidth="1.500">
            <path d="M8 16.500A8 8 0 1 1 17 8M8.500 1v15.500M1.500 6h15M1.500 11.500H9M6.500 1.500c-4 5-4 10 0 15M11 1.500c2 1.500 3 3 3 5" />
            <path d="M11.500 17V9h2.500a2 2 0 0 1 0 4.500h-2M14 13.500l3 3.500M16 10v3" />
          </g>
        </Svg>
      </RailButton>
      <RailButton type="button" aria-label="用户" $height={31} $divided>
        <Svg size={20}>
          <path d="M0 0h20v20H0z" fill="#93bdec" stroke="none" />
          <path d="M4 8c0-9 12-9 12 0v1H4zM6 9h8c0 4-1 5-2 6v2l5 3H3l5-3v-2c-1-1-2-2-2-6z" fill="#fff" stroke="none" />
          <path d="M8 2v4M12 2v4M5 8.500h10" stroke="#c8dcf3" />
        </Svg>
      </RailButton>
      <RailButton type="button" aria-label="撤销" $divided>
        <Svg size={16}>
          <path d="M2 5h7a4.500 4.500 0 0 1 0 9H4" stroke="#3d4651" strokeWidth="2.500" />
          <path d="M0 5l6-5v10z" fill="#3d4651" stroke="none" />
        </Svg>
      </RailButton>
      <RailButton type="button" aria-label="列表" $active $divided>
        <Svg size={16}>
          <path d="M0 2h2M0 8h2M0 14h2M4 2h12M4 8h12M4 14h12" stroke="#3f87d8" strokeWidth="1.500" />
        </Svg>
      </RailButton>
      <RailButton type="button" aria-label="链接" $divided>
        <Svg size={18}>
          <circle cx="9" cy="9" r="9" fill="#55606b" stroke="none" />
          <g transform="rotate(-45 9 9)" stroke="#fff" strokeWidth="1.500">
            <path d="M8 6.500H5.500a2.500 2.500 0 0 0 0 5H8a2.500 2.500 0 0 0 2.500-2.500M10 11.500h2.500a2.500 2.500 0 0 0 0-5H10A2.500 2.500 0 0 0 7.500 9" />
          </g>
        </Svg>
      </RailButton>
      <RailButton type="button" aria-label="文件" $divided>
        <Svg size={18}>
          <path d="M0 1a1 1 0 0 1 1-1h6l2 2h9v15a1 1 0 0 1-1 1H1a1 1 0 0 1-1-1z" fill="#55606b" stroke="none" />
          <path d="M7 9h8M7 13h8" stroke="#fff" strokeWidth="2" />
        </Svg>
      </RailButton>
      <RailButton type="button" aria-label="帮助" $divided>
        <Svg size={20}>
          <g stroke="#46505c" strokeWidth="1.500">
            <circle cx="10" cy="10" r="9" />
            <path d="M7 8c0-4 6-4 6-.5 0 2.500-3 2.500-3 5M10 14v1.500" />
          </g>
        </Svg>
      </RailButton>
      <RailButton type="button" aria-label="通知" $divided>
        <Svg size={18}>
          <path d="M9 0l1 1.500c4 1 5 4 5 8l2.500 4.500H.500L3 9.500c0-4 1-7 5-8zM7 15.500h4L9 18z" fill="#55606b" stroke="none" />
        </Svg>
      </RailButton>
      <RailSpace />
      <RailButton type="button" aria-label="上传" $height={40}>
        <Svg size={20}>
          <path d="M8 16.500H4.500C0 16 0 10 4 9.500 4 2 14 1.500 15 7.500c6 1 5 9 0 9h-3M10 14.500V9M7 11l3-3 3 3" stroke="#46505c" strokeWidth="1.500" />
        </Svg>
      </RailButton>
    </Rail>
  );
}

function ProjectTree() {
  return (
    <Side>
      <SideTabs>
        <SideTab type="button" aria-label="项目">
          <Svg size={14}>
            <path d="M1 1h12v12H1zM5 1v12" stroke="#4a90d9" strokeWidth="1.500" />
          </Svg>
        </SideTab>
        <SideTab type="button" aria-label="筛选">
          <Svg size={18}>
            <path d="M1.500 2h15L11 9v7l-4-2V9z" strokeWidth="2" />
          </Svg>
        </SideTab>
        <SideTab type="button" aria-label="构件">
          <Svg size={18}>
            <circle cx="9" cy="5" r="4.500" strokeWidth="2" />
            <circle cx="9" cy="5" r="1" fill={I} />
            <path d="M1 7v3l6 4v4M17 7v3l-6 4v4" strokeWidth="2" />
          </Svg>
        </SideTab>
        <SideTab type="button" aria-label="模型">
          <Svg size={20}>
            <path d="M10 1l8.500 4.500v9L10 19l-8.500-4.500v-9zM5.500 7.500L10 10l4.500-2.500" strokeWidth="2" />
          </Svg>
        </SideTab>
      </SideTabs>
      <ul>
        {tree.map(([label, icon, children], index) => (
          <li key={label}>
            <TreeRow type="button" $group={Boolean(children)}>
              {children ? <Chevron /> : <Elbow $leaf $last={index === tree.length - 1} />}
              <TreeIcon>
                <Svg size={16}>{treeIcons[icon]}</Svg>
              </TreeIcon>
              {label}
            </TreeRow>
            {children && (
              <ul>
                {children.map((name, i) => (
                  <li key={name}>
                    <TreeRow type="button" $selected={name === "1F"}>
                      {name !== "1F" && (
                        <>
                          <Guide />
                          <Elbow $last={i === children.length - 1} />
                        </>
                      )}
                      <MixedText>{name}</MixedText>
                    </TreeRow>
                  </li>
                ))}
              </ul>
            )}
          </li>
        ))}
      </ul>
    </Side>
  );
}

function SelectField({ id, label, value, latin }) {
  return (
    <Field>
      <label htmlFor={id}>{label}</label>
      <SelectWrap>
        <Select id={id} $latin={latin}>
          <option>{value}</option>
        </Select>
        <Chevron />
      </SelectWrap>
    </Field>
  );
}

function TextField({ id, label, value }) {
  return (
    <Field>
      <label htmlFor={id}>{label}</label>
      <TextBox id={id} defaultValue={value} />
    </Field>
  );
}

function CheckField({ id, label }) {
  return (
    <Field>
      <label htmlFor={id}>{label}</label>
      <CheckBox id={id} type="checkbox" />
    </Field>
  );
}

function PropertyPanel() {
  return (
    <Panel $grow>
      <PanelTitle>属性面板</PanelTitle>
      <TypePicker>
        <TypeButton type="button">
          <Svg size={30}>
            <circle cx="14.500" cy="15" r="9" fill="#a4a7ab" stroke="none" />
            <path d="M12.500 2L27 7l-1 14-9 6-14-4V9zM3 9l15 4 9-6M18 13l-1 14" stroke="#c9ccd0" strokeWidth="1.500" />
            <path d="M12.500 2h0M27 7h0M26 21h0M17 27h0M3 23h0M3 9h0" stroke="#e0e2e4" strokeWidth="4" strokeLinecap="round" />
          </Svg>
          <TypeText>
            视图名称
            <br />
            平面视图
          </TypeText>
          <Chevron color="#e0e2e4" />
        </TypeButton>
        <TypeActions>
          <TypeAction type="button" aria-label="新建">
            <Svg size={12}>
              <path d="M6 1v10M1 6h10" strokeWidth="1.500" />
            </Svg>
          </TypeAction>
          <TypeAction type="button" aria-label="编辑">
            <Svg size={12}>
              <path d="M1 2h10M1 6h10M1 10h10M4 .5v3M8 4.500v3M4 8.500v3" strokeWidth="1.500" />
            </Svg>
          </TypeAction>
        </TypeActions>
      </TypePicker>
      <Properties>
        <Fields>
          <Section $gap={7}>
            <SectionHead type="button" $pull={-3}>
              <Chevron />
              基本属性
            </SectionHead>
            <TextField id="name" label="视图名称" value="1F" />
            <SelectField id="scale" label="视图比例" value="1:100" latin />
            <SelectField id="mode" label="显示模式" value="着色模式" />
            <SelectField id="plane" label="工作平面" value="1F" latin />
            <Field>
              <label htmlFor="style">视图对象样式</label>
              <SetButton id="style" type="button">设置</SetButton>
            </Field>
          </Section>
          <Section $gap={6}>
            <SectionHead type="button" $pull={-2}>
              <Chevron />
              视图范围
            </SectionHead>
            <CheckField id="crop" label="视口裁剪" />
            <CheckField id="frame" label="显示裁剪框" />
            <SelectField id="range" label="可见构件范围" value="按高度显示" />
            <TextField id="top" label="顶部偏移" value="2300" />
            <TextField id="cut" label="剖切面偏移" value="1200" />
            <TextField id="bottom" label="底部偏移" value="−150" />
          </Section>
        </Fields>
        <Scrollbar />
      </Properties>
    </Panel>
  );
}

function Status({ names }) {
  return names.map((name) => (
    <Svg key={name} size={16}>{statusIcons[name]}</Svg>
  ));
}

function App() {
  return (
    <Page>
      <GlobalStyle />
      <TitleBar>
        <Svg size={26}>
          <path d="M8 1.500l16 4-2 15.500-5 3M8 1.500L7 19l10 3.500V10L2 7v16l6 2 14-5M12 8l7 2-1 9" stroke="#1b74c8" strokeWidth="1.500" />
        </Svg>
        <Title>
          <MixedText>无样板 – 平面视图: 1F</MixedText>
        </Title>
        <WindowButtons>
          <WindowButton type="button" aria-label="最小化">
            <Svg size={12}>
              <path d="M3.500 6.500h5" strokeWidth="1.500" />
            </Svg>
          </WindowButton>
          <WindowButton type="button" aria-label="最大化">
            <Svg size={12}>
              <path d="M2 2h8v8H2z" strokeWidth="1.500" />
            </Svg>
          </WindowButton>
          <WindowButton type="button" aria-label="关闭窗口">
            <Svg size={12}>
              <path d="M1.500 1.500l9 9M10.500 1.500l-9 9" strokeWidth="1.500" />
            </Svg>
          </WindowButton>
        </WindowButtons>
      </TitleBar>
      <Body>
        <LeftRail />
        <Main>
          <QuickBar>
            <MenuTab type="button">建筑</MenuTab>
            <QuickGroup $gap={14}>
              <QuickGroup>
                <QuickItem icon="save" label="保存" />
                <QuickItem icon="submit" label="提交" />
                <QuickItem icon="closeFile" label="关闭" />
                <QuickItem icon="clipboard" label="剪贴板" menu />
              </QuickGroup>
              <QuickItem icon="undo" />
              <QuickItem icon="redo" />
              <QuickItem icon="manage" label="项目管理" menu />
              <QuickItem icon="gear" label="系统设置" menu />
            </QuickGroup>
            <QuickGroup $end>
              <QuickItem icon="feedback" label="反馈" />
              <QuickItem icon="help" label="帮助" />
            </QuickGroup>
          </QuickBar>
          <RibbonBar>
            <RibbonScroll type="button" aria-label="向左" $width={20}>
              <Chevron dir="left" />
            </RibbonScroll>
            <RibbonGroups>
              {ribbon.map((group) => (
                <RibbonGroup key={group[0][0]}>
                  {group.map((item) => (
                    <RibbonItem key={item[0]} item={item} />
                  ))}
                </RibbonGroup>
              ))}
            </RibbonGroups>
            <RibbonScroll type="button" aria-label="向右" $width={12}>
              <Chevron dir="right" />
            </RibbonScroll>
          </RibbonBar>
          <Workspace>
            <ProjectTree />
            <View>
              <ViewTabs>
                <NewViewButton type="button" aria-label="新建视图">
                  <Svg size={13}>
                    <path d="M6 9.500H1v-7h11v5M7 9.500h5.500M10 7v5" strokeWidth="1.500" />
                  </Svg>
                </NewViewButton>
                <ViewTab>
                  <ViewName type="button">
                    <Svg size={16}>{floorPlan}</Svg>
                    <Latin>1F</Latin>
                  </ViewName>
                  <CloseTab type="button" aria-label="关闭视图">
                    <Svg size={12}>
                      <path d="M1 1l10 10M11 1L1 11" strokeWidth="1.500" />
                    </Svg>
                  </CloseTab>
                </ViewTab>
              </ViewTabs>
              <Canvas>
                <Collapse type="button" aria-label="收起">
                  <Chevron dir="left" color="#fff" />
                </Collapse>
                <FloatTools>
                  <button type="button" aria-label="恢复">
                    <Svg size={18}>
                      <path d="M3 5a7 7 0 1 1 2 10M9 5.500V10h4" stroke="#a4a9af" strokeWidth="2.500" />
                      <path d="M0 1v7h7z" fill="#a4a9af" stroke="none" />
                    </Svg>
                  </button>
                  <button type="button" aria-label="取消">
                    <Svg size={18}>
                      <path d="M3 3l12 12M15 3L3 15" stroke="#a4a9af" strokeWidth="3" />
                    </Svg>
                  </button>
                </FloatTools>
                <Dock>
                  <Panel>
                    <PanelTitle>通用工具</PanelTitle>
                    <ToolGrid>
                      {toolIcons.map(([label, icon]) => (
                        <Tool key={label} type="button" aria-label={label}>
                          <Svg size={22}>{icon}</Svg>
                        </Tool>
                      ))}
                    </ToolGrid>
                  </Panel>
                  <PropertyPanel />
                </Dock>
              </Canvas>
            </View>
          </Workspace>
          <StatusBar>
            <StatusGroup $end $left={20}>
              <Status names={["tilesA", "tilesB", "tilesC"]} />
            </StatusGroup>
            <StatusRight>
              <StatusGroup $start>
                <Status names={["axis", "list", "crop"]} />
              </StatusGroup>
              <StatusGroup $start>
                <Status names={["link", "auto", "pane", "cube", "focus"]} />
              </StatusGroup>
            </StatusRight>
          </StatusBar>
        </Main>
      </Body>
    </Page>
  );
}

export default App;
